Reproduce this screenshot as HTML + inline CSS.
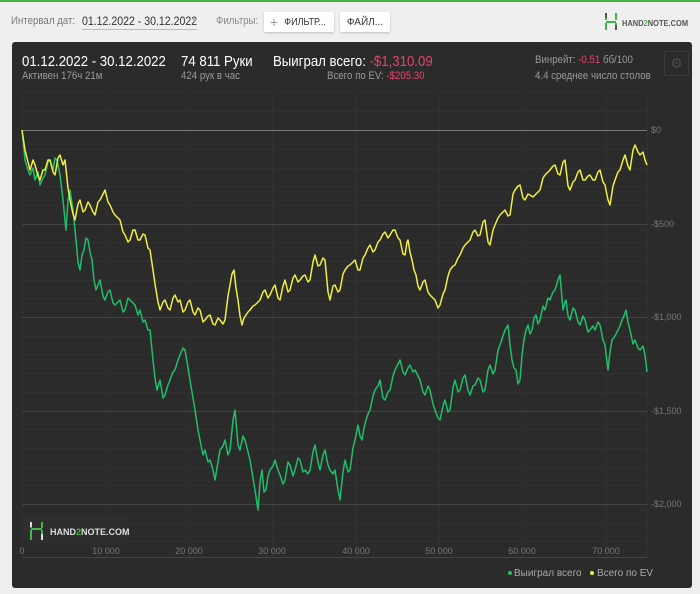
<!DOCTYPE html>
<html><head><meta charset="utf-8"><style>
*{margin:0;padding:0;box-sizing:border-box}
body{width:700px;height:594px;background:#efefef;font-family:"Liberation Sans",sans-serif;position:relative;overflow:hidden}
.t{position:absolute;white-space:nowrap;transform:scaleX(.88);transform-origin:0 0}
.btn{position:absolute;background:#fff;border-radius:2px;box-shadow:0 1px 2px rgba(0,0,0,.2);font-size:10px;color:#333;display:flex;align-items:center;justify-content:center;white-space:nowrap}
#p{position:absolute;left:12px;top:42px;width:680px;height:546px;background:#2b2b2b;border-radius:3px}
.g{color:#9a9a9a;font-size:11px}
.r{color:#e8436b}
svg.s{position:absolute;left:0;top:0}
</style></head><body>
<div style="position:absolute;left:0;top:0;width:700px;height:2px;background:#43b649"></div>
<div class="t" style="left:11px;top:15px;font-size:11px;color:#777">Интервал дат:</div>
<div class="t" style="left:82px;top:14px;font-size:12px;color:#333;border-bottom:1px solid #bbb;padding-bottom:1px">01.12.2022 - 30.12.2022</div>
<div class="t" style="left:191px;top:16px;font-size:8px;color:#aaa">▼</div>
<div class="t" style="left:216px;top:15px;font-size:11px;color:#888">Фильтры:</div>
<div class="btn" style="left:264px;top:12px;width:70px;height:20px"><span style="color:#999;font-size:14px;margin-right:4px">+</span><span style="transform:scaleX(.9);display:inline-block">ФИЛЬТР...</span></div>
<div class="btn" style="left:340px;top:12px;width:50px;height:20px">ФАЙЛ...</div>
<svg class="s" width="700" height="40"><path d="M606 13v7M606 23v7M616 13v7M616 23v7M606 22h10" stroke="#43b649" stroke-width="2" fill="none"/><path d="M606 13v5M616 25v5" stroke="#555" stroke-width="2"/></svg>
<div class="t" style="left:622px;top:18px;font-size:8.5px;font-weight:bold;color:#555">HAND<span style="color:#43b649">2</span>NOTE.COM</div>
<div id="p">
<div class="t" style="left:10px;top:11px;font-size:15px;color:#fff">01.12.2022 - 30.12.2022</div>
<div class="t g" style="left:10px;top:28px">Активен 176ч 21м</div>
<div class="t" style="left:169px;top:11px;font-size:15px;color:#fff">74 811 Руки</div>
<div class="t g" style="left:169px;top:28px">424 рук в час</div>
<div class="t" style="left:261px;top:11px;font-size:15px;color:#fff">Выиграл всего: <span class="r">-$1,310.09</span></div>
<div class="t g" style="left:315px;top:28px">Всего по EV: <span class="r">-$205.30</span></div>
<div class="t g" style="left:523px;top:12px">Винрейт: <span class="r">-0.51</span> бб/100</div>
<div class="t g" style="left:523px;top:28px">4.4 среднее число столов</div>
<div style="position:absolute;left:652px;top:9px;width:25px;height:25px;border:1px solid #3a3a3a;border-radius:2px;color:#4a4a4a;font-size:14px;text-align:center;line-height:23px">⚙</div>
</div>
<svg class="s" width="700" height="594">
<g stroke="#313131" stroke-width="1">
<path d="M22 92.5H647M22 111.5H647M22 149.5H647M22 168.5H647M22 186.5H647M22 205.5H647M22 242.5H647M22 261.5H647M22 280.5H647M22 298.5H647M22 336.5H647M22 354.5H647M22 373.5H647M22 392.5H647M22 429.5H647M22 448.5H647M22 467.5H647M22 485.5H647M22 523.5H647M22 541.5H647"/>
<path d="M22.5 92V557M106.5 92V557M189.5 92V557M272.5 92V557M356.5 92V557M439.5 92V557M522.5 92V557M606.5 92V557M647.5 92V557"/>
</g>
<path d="M22 224.5H647M22 317.5H647M22 411.5H647M22 504.5H647M22 557.5H647" stroke="#444"/>
<path d="M22 130.5H647" stroke="#777"/>
<g font-size="9" fill="#777" font-family="Liberation Sans,sans-serif">
<text x="651" y="133">$0</text><text x="651" y="227">-$500</text><text x="651" y="320">-$1,000</text><text x="651" y="414">-$1,500</text><text x="651" y="507">-$2,000</text>
<g text-anchor="middle"><text x="22" y="554">0</text><text x="106" y="554">10 000</text><text x="189" y="554">20 000</text><text x="272" y="554">30 000</text><text x="356" y="554">40 000</text><text x="439" y="554">50 000</text><text x="522" y="554">60 000</text><text x="606" y="554">70 000</text></g>
<text x="514" y="576" fill="#aaa" font-size="10">Выиграл всего</text><text x="597" y="576" fill="#aaa" font-size="10">Всего по EV</text>
</g>
<circle cx="510" cy="573" r="2" fill="#1fbf6a"/><circle cx="592" cy="573" r="2" fill="#f0ee40"/>
<rect x="24" y="517" width="104" height="26" fill="#2e2e2e"/>
<path d="M31 522v6M31 530v10M42 522v6M42 530v10M31 529h11" stroke="#43b649" stroke-width="2" fill="none"/><path d="M31 522v5M42 534v6" stroke="#ddd" stroke-width="2"/>
<text x="50" y="535" font-size="9" font-weight="bold" fill="#ddd" font-family="Liberation Sans,sans-serif">HAND<tspan fill="#43b649">2</tspan>NOTE.COM</text>
<polyline fill="none" stroke="#1fbf6a" stroke-width="1.5" stroke-linejoin="round" points="22,130 25,160 28,170 30,175 33,168 35,180 38,172 40,185 43,178 45,175 48,162 50,160 53,170 55,158 57,160 60,175 63,200 66,230 68,200 70,190 73,210 76,240 78,262 80,270 82,255 84,250 86,238 88,240 90,252 92,260 94,280 96,290 100,280 103,296 105,300 108,292 110,290 113,303 115,305 120,300 123,312 125,310 128,298 130,300 135,305 138,315 140,310 143,322 145,320 148,330 150,330 153,360 155,378 157,390 160,380 163,398 165,395 168,385 170,380 173,372 175,370 178,360 180,355 183,348 185,350 188,368 190,380 193,398 195,410 198,430 200,440 203,455 205,450 208,462 210,460 213,470 215,480 218,462 220,450 223,446 225,440 228,455 230,450 233,420 235,410 238,445 240,450 243,436 245,440 248,452 250,460 253,478 255,490 258,510 260,482 262,470 264,492 266,490 268,476 270,470 273,466 275,460 278,470 280,475 283,484 285,480 288,462 290,465 293,476 295,470 298,458 300,460 303,472 305,470 308,474 310,470 313,452 315,445 318,462 320,470 323,455 325,450 328,465 330,470 333,474 335,470 338,490 340,500 343,472 345,460 348,472 350,470 353,448 355,440 358,425 360,436 362,440 364,428 366,420 368,414 370,410 373,396 375,390 378,386 380,380 383,398 385,400 388,392 390,390 393,376 395,370 398,364 400,360 403,372 405,375 408,368 410,365 413,372 415,370 418,376 420,380 423,392 425,395 428,386 430,390 433,404 435,410 438,418 440,420 443,406 445,400 448,412 450,410 453,388 455,380 458,392 460,390 463,378 465,375 468,390 470,395 473,386 475,385 478,378 480,380 483,392 485,390 488,370 490,365 493,374 495,370 498,350 500,345 503,336 505,330 508,325 510,345 512,360 514,368 516,370 518,384 520,380 522,355 524,340 526,330 528,325 530,334 532,330 534,318 536,315 538,324 540,320 543,306 545,310 548,298 550,300 553,292 555,290 558,280 560,275 562,298 563,310 565,302 566,300 568,316 570,320 573,308 575,310 578,322 580,325 583,316 585,320 588,332 590,330 593,326 595,330 598,322 600,325 603,340 605,345 607,362 608,370 610,352 612,340 615,336 618,330 620,326 622,320 624,316 626,310 628,322 630,330 633,344 635,340 638,348 640,350 643,346 645,355 647,372"/>
<polyline fill="none" stroke="#f0ee40" stroke-width="1.5" stroke-linejoin="round" points="22,130 25,150 28,162 30,170 33,160 35,165 38,176 40,180 43,170 45,170 48,160 50,160 53,172 55,175 58,158 60,155 63,165 65,160 68,188 70,200 73,214 75,220 78,204 80,200 83,212 85,210 88,202 90,205 93,212 95,215 98,202 100,200 103,194 105,190 108,202 110,205 113,212 115,215 118,218 120,220 123,232 125,235 128,242 130,240 133,230 135,230 138,240 140,240 143,234 145,235 148,248 150,250 153,270 155,284 156,290 158,302 160,310 163,302 165,300 168,308 170,310 173,298 175,295 178,302 180,300 183,312 185,310 188,302 190,300 193,312 195,315 198,308 200,310 203,322 205,320 208,316 210,315 213,324 215,325 218,318 220,320 223,324 225,320 228,296 230,285 232,274 234,270 236,288 238,300 240,316 242,325 244,318 246,315 248,312 250,310 253,306 255,305 258,302 260,300 263,292 265,290 268,298 270,295 273,288 275,285 278,298 280,300 283,286 285,280 288,292 290,290 293,278 295,275 298,282 300,280 303,276 305,275 308,282 310,280 313,262 315,255 318,266 320,265 323,258 325,260 328,292 330,300 333,286 335,285 338,292 340,290 343,274 345,270 348,266 350,265 353,262 355,260 358,270 360,270 363,258 365,255 368,248 370,245 373,252 375,250 378,242 380,240 383,234 385,232 388,238 390,235 393,230 395,230 398,238 400,240 403,254 405,255 407,242 408,240 410,252 412,260 414,270 416,275 418,286 420,290 423,282 425,280 428,292 430,295 433,298 435,300 438,308 440,305 443,294 445,290 448,276 450,270 453,266 455,265 458,258 460,255 463,248 465,245 468,242 470,240 473,232 475,230 478,236 480,235 483,222 485,220 488,242 490,245 493,230 495,225 498,218 500,215 503,212 505,210 508,216 510,215 513,194 515,190 518,186 520,185 523,198 525,200 528,194 530,195 533,197 535,195 538,192 540,190 543,178 545,175 548,172 550,170 553,166 555,165 558,174 560,175 563,162 565,160 568,186 570,190 573,182 575,180 578,172 580,170 583,180 585,180 588,176 590,175 593,180 595,180 598,172 600,170 603,182 605,185 608,200 610,205 613,186 615,180 618,172 620,170 623,160 625,155 628,166 630,170 633,150 635,145 638,152 640,155 643,152 645,160 647,165"/>
</svg>
</body></html>
